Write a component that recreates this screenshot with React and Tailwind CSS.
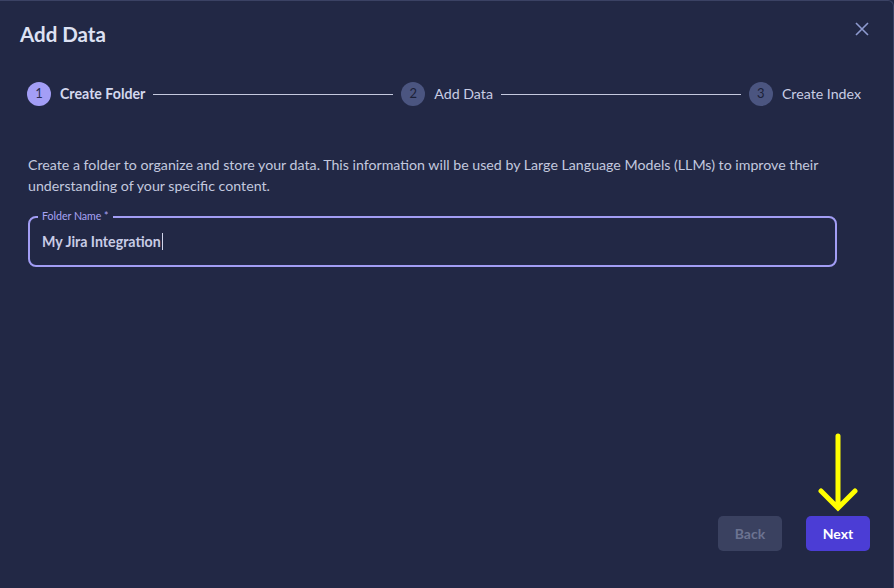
const font = { fontFamily: "Lato, 'Liberation Sans', sans-serif" };

function Step({ n, label, active }) {
  return (
    <div className="flex items-center gap-[9px] shrink-0">
      <div
        className={`w-6 h-6 rounded-full flex items-center justify-center text-[13px] ${
          active ? "bg-[#a39ef6] text-[#2a2d52]" : "bg-[#4b5580] text-[#1c2138]"
        }`}
      >
        {n}
      </div>
      <span className={`text-[14.2px] ${active ? "font-bold text-[#d4d8ee]" : "text-[#c9cde4]"}`}>{label}</span>
    </div>
  );
}

export default function App() {
  return (
    <div className="w-[894px] h-[588px] bg-[#222845] relative overflow-hidden" style={font}>
      <div className="h-full border-t border-r border-[#3b4264] rounded-tr-[6px] flex flex-col">
        <div className="flex items-start justify-between pl-5 pr-[24px] pt-[20px]">
          <h1 className="text-[20.5px] font-bold text-[#dde1f3] leading-[26px]">Add Data</h1>
          <button className="text-[#8e9acf] mt-px">
            <svg width="14" height="14" viewBox="0 0 14 14">
              <path d="M1 1 L13 13 M13 1 L1 13" stroke="currentColor" strokeWidth="1.6" fill="none" />
            </svg>
          </button>
        </div>

        <div className="flex items-center gap-2 pl-[27px] pr-[32px] mt-[35px]">
          <Step n="1" label="Create Folder" active />
          <div className="flex-1 h-px bg-[#c5c9de]" />
          <Step n="2" label="Add Data" />
          <div className="flex-1 h-px bg-[#c5c9de]" />
          <Step n="3" label="Create Index" />
        </div>

        <p className="px-7 mt-[48px] text-[14.2px] leading-[21px] text-[#c3c8df] pr-[60px]">
          Create a folder to organize and store your data. This information will be used by Large Language Models (LLMs) to
          improve their understanding of your specific content.
        </p>

        <div className="ml-7 mt-[20px] w-[809px] h-[51px] relative rounded-[8px] border-2 border-[#a29df4] flex items-center px-3">
          <span className="absolute -top-[9px] left-[8px] px-1 bg-[#222845] text-[10.6px] leading-[14px] text-[#a8a3f5]">
            Folder Name *
          </span>
          <span className="text-[14.2px] font-bold text-[#c8cce6]">My Jira Integration</span>
          <span className="w-px h-[17px] bg-[#d0d4ea] ml-px" />
        </div>

        <div className="flex-1" />

        <div className="flex justify-end gap-6 pr-[23px] pb-[37px]">
          <button className="w-16 h-[35px] rounded-[5px] bg-[#3a4160] text-[#6c7391] text-[14px] font-bold">Back</button>
          <button className="w-16 h-[35px] rounded-[5px] bg-[#4b3dd5] text-white text-[14px] font-bold">Next</button>
        </div>
      </div>

      <svg className="absolute left-[815px] top-[432px]" width="46" height="82" viewBox="0 0 46 82">
        <path d="M23 4 V76 M6 59 L23 76 L40 59" stroke="#ffff00" strokeWidth="5" fill="none" strokeLinecap="round" strokeLinejoin="miter" />
      </svg>
    </div>
  );
}
